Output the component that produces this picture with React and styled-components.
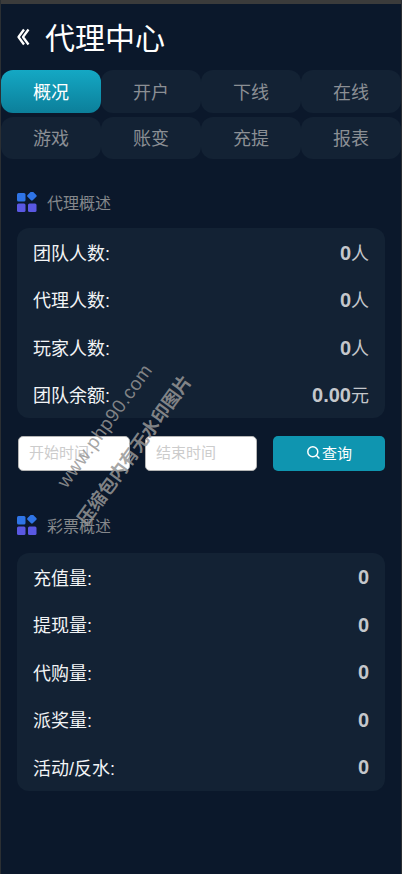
import React from 'react'
import styled, { createGlobalStyle } from 'styled-components'

const GlobalStyle = createGlobalStyle`
  html, body {
    margin: 0;
    padding: 0;
    background: #0b182b;
  }
  * { box-sizing: border-box; }
`

const tabs = ['概况', '开户', '下线', '在线', '游戏', '账变', '充提', '报表']

const agentRows = [
  { label: '团队人数:', value: '0', unit: '人' },
  { label: '代理人数:', value: '0', unit: '人' },
  { label: '玩家人数:', value: '0', unit: '人' },
  { label: '团队余额:', value: '0.00', unit: '元' },
]

const lotteryRows = [
  { label: '充值量:', value: '0' },
  { label: '提现量:', value: '0' },
  { label: '代购量:', value: '0' },
  { label: '派奖量:', value: '0' },
  { label: '活动/反水:', value: '0' },
]

const GridIcon = () => (
  <svg width="20" height="20" viewBox="0 0 20 20">
    <rect x="0" y="1" width="8.5" height="8.5" rx="1.5" fill="#2f74e6" />
    <rect x="11.2" y="0.2" width="7.4" height="7.4" rx="1.2" fill="#2f74e6" transform="rotate(45 14.9 3.9)" />
    <rect x="0" y="11.5" width="8.5" height="8.5" rx="1.5" fill="#5a58e2" />
    <rect x="11" y="11.5" width="8.5" height="8.5" rx="1.5" fill="#5a58e2" />
  </svg>
)

const StatCard = ({ rows }) => (
  <Card>
    {rows.map(row => (
      <Row key={row.label}>
        <RowLabel>{row.label}</RowLabel>
        <RowValue $plain={!row.unit}>
          <b>{row.value}</b>
          {row.unit}
        </RowValue>
      </Row>
    ))}
  </Card>
)

const App = () => (
  <Page>
    <GlobalStyle />
    <TopStrip />
    <Header>
      <svg width="14" height="18" viewBox="0 0 14 18" fill="none" stroke="#fff" strokeWidth="2.3" strokeLinejoin="round">
        <path d="M8 1.5 L2.5 9 L8 16.5" />
        <path d="M12.5 1.5 L7 9 L12.5 16.5" />
      </svg>
      <Title>代理中心</Title>
    </Header>
    <Tabs>
      {tabs.map((tab, i) => (
        <Tab key={tab} $active={i === 0}>{tab}</Tab>
      ))}
    </Tabs>
    <SectionTitle $top={33} $bottom={16}>
      <GridIcon />
      代理概述
    </SectionTitle>
    <StatCard rows={agentRows} />
    <FilterRow>
      <DateInput placeholder="开始时间" />
      <DateInput placeholder="结束时间" />
      <QueryButton>
        <svg width="15" height="15" viewBox="0 0 15 15" fill="none" stroke="#fff" strokeWidth="1.5">
          <circle cx="6.8" cy="6.8" r="5" />
          <path d="M10.5 10.5 L13.5 13.5" />
        </svg>
        查询
      </QueryButton>
    </FilterRow>
    <SectionTitle $top={44} $bottom={18}>
      <GridIcon />
      彩票概述
    </SectionTitle>
    <StatCard rows={lotteryRows} />
    <WatermarkLine $x={104} $y={426} $latin>www.php90.com</WatermarkLine>
    <WatermarkLine $x={132} $y={449}>压缩包内有无水印图片</WatermarkLine>
  </Page>
)

export default App

const Page = styled.div`
  position: relative;
  width: 402px;
  height: 874px;
  overflow: hidden;
  background: #0b182b;
  border-left: 1px solid #2b2f33;
  border-right: 1px solid #2b2f33;
  font-family: "Liberation Sans", "Noto Sans CJK SC", sans-serif;
`

const TopStrip = styled.div`
  height: 4px;
  margin: 0 -1px;
  background: #3b3b3b;
`

const Header = styled.div`
  display: flex;
  align-items: center;
  gap: 15px;
  height: 66px;
  padding-left: 15px;
`

const Title = styled.h1`
  margin: 0;
  padding-top: 3px;
  font-size: 30px;
  font-weight: 400;
  line-height: 1;
  color: #fff;
`

const Tabs = styled.div`
  display: grid;
  grid-template-columns: repeat(4, 100px);
  grid-template-rows: 43px 42px;
  row-gap: 4px;
`

const Tab = styled.div`
  display: flex;
  align-items: center;
  justify-content: center;
  padding-bottom: 2px;
  border-radius: 12px;
  font-size: 18px;
  color: ${props => (props.$active ? '#fff' : '#8b8f94')};
  background: ${props => (props.$active ? 'linear-gradient(180deg, #14a8c4, #0c7f9a)' : '#132234')};
`

const SectionTitle = styled.div`
  display: flex;
  align-items: center;
  gap: 10px;
  height: 20px;
  margin: ${props => props.$top}px 0 ${props => props.$bottom}px 16px;
  font-size: 16px;
  color: #85888c;
`

const Card = styled.div`
  display: flex;
  flex-direction: column;
  width: 368px;
  margin-left: 16px;
  border-radius: 12px;
  background: #132234;
`

const Row = styled.div`
  display: flex;
  align-items: center;
  justify-content: space-between;
  height: 47.5px;
  padding: 0 16px;
`

const RowLabel = styled.span`
  font-size: 18px;
  color: #f2f4f6;
`

const RowValue = styled.span`
  padding-top: ${props => (props.$plain ? 2 : 0)}px;
  font-size: 18px;
  color: #c4c7cb;

  b {
    font-size: 20px;
    font-weight: 700;
  }
`

const FilterRow = styled.div`
  display: flex;
  align-items: center;
  height: 35px;
  margin: 18px 0 0 17px;
`

const DateInput = styled.input`
  width: 112px;
  height: 35px;
  margin-right: 15px;
  padding: 0 10px 2px;
  border: 1px solid #b5b5b5;
  border-radius: 5px;
  background: #fff;
  font-family: inherit;
  font-size: 15px;

  &::placeholder {
    color: #cccccc;
  }
`

const QueryButton = styled.div`
  display: flex;
  align-items: center;
  justify-content: center;
  gap: 1px;
  width: 112px;
  height: 35px;
  margin-left: 1px;
  padding-bottom: 2px;
  border-radius: 5px;
  background: #0f95b0;
  font-size: 15px;
  color: #fff;
`

const WatermarkLine = styled.span`
  position: absolute;
  left: ${props => props.$x}px;
  top: ${props => props.$y}px;
  transform: translate(-50%, -50%) rotate(-54deg);
  pointer-events: none;
  font-size: ${props => (props.$latin ? 19 : 18)}px;
  font-weight: ${props => (props.$latin ? 400 : 700)};
  letter-spacing: ${props => (props.$latin ? 0.6 : 0)}px;
  white-space: nowrap;
  color: rgba(150, 150, 150, 0.85);
`
